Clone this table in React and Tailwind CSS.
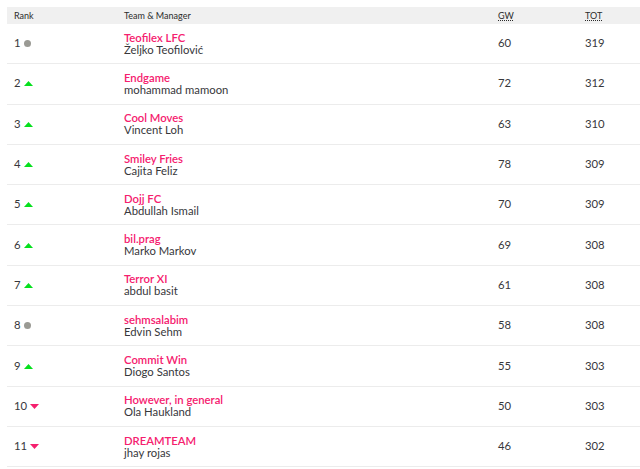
import React from 'react';

const rows = [
    { rank: 1, move: 'same', team: 'Teofilex LFC', manager: 'Željko Teofilović', gw: 60, tot: 319 },
    { rank: 2, move: 'up', team: 'Endgame', manager: 'mohammad mamoon', gw: 72, tot: 312 },
    { rank: 3, move: 'up', team: 'Cool Moves', manager: 'Vincent Loh', gw: 63, tot: 310 },
    { rank: 4, move: 'up', team: 'Smiley Fries', manager: 'Cajita Feliz', gw: 78, tot: 309 },
    { rank: 5, move: 'up', team: 'Dojj FC', manager: 'Abdullah Ismail', gw: 70, tot: 309 },
    { rank: 6, move: 'up', team: 'bil.prag', manager: 'Marko Markov', gw: 69, tot: 308 },
    { rank: 7, move: 'up', team: 'Terror XI', manager: 'abdul basit', gw: 61, tot: 308 },
    { rank: 8, move: 'same', team: 'sehmsalabim', manager: 'Edvin Sehm', gw: 58, tot: 308 },
    { rank: 9, move: 'up', team: 'Commit Win', manager: 'Diogo Santos', gw: 55, tot: 303 },
    { rank: 10, move: 'down', team: 'However, in general', manager: 'Ola Haukland', gw: 50, tot: 303 },
    { rank: 11, move: 'down', team: 'DREAMTEAM', manager: 'jhay rojas', gw: 46, tot: 302 },
];

const Move = ({ move }) => {
    if (move === 'same') {
        return <span className="inline-block w-[7px] h-[7px] rounded-full bg-[#9a9a94] ml-[3px]" />;
    }
    if (move === 'up') {
        return (
            <svg width="9" height="5" viewBox="0 0 9 5" className="ml-[3px]">
                <polygon points="0,5 4.5,0 9,5" fill="#05e01d" />
            </svg>
        );
    }
    return (
        <svg width="9" height="5" viewBox="0 0 9 5" className="ml-[3px]">
            <polygon points="0,0 9,0 4.5,5" fill="#f5206e" />
        </svg>
    );
};

const App = () => {
    return (
        <div className="w-[640px] h-[469px] overflow-hidden bg-white pt-[7px] pl-[7px] font-['Lato','Liberation_Sans',sans-serif] text-[#37373b]">
            <div className="flex items-center h-[17px] bg-[#f0f0f0] text-[9px] text-[#2b2b2b]">
                <div className="w-[117px] pl-[7px]">Rank</div>
                <div className="flex-1">Team &amp; Manager</div>
                <div className="w-[87px] underline decoration-dotted">GW</div>
                <div className="w-[55px] underline decoration-dotted">TOT</div>
            </div>
            {rows.map((r) => (
                <div key={r.rank} className="flex items-center h-[40.3px] border-b border-[#ececec] text-[11.3px]">
                    <div className="w-[117px] pl-[7px] flex items-center">
                        <span>{r.rank}</span>
                        <Move move={r.move} />
                    </div>
                    <div className="flex-1 leading-[12px]">
                        <div className="text-[#f5206e] font-semibold">{r.team}</div>
                        <div>{r.manager}</div>
                    </div>
                    <div className="w-[87px]">{r.gw}</div>
                    <div className="w-[55px]">{r.tot}</div>
                </div>
            ))}
        </div>
    );
};

export default App;
